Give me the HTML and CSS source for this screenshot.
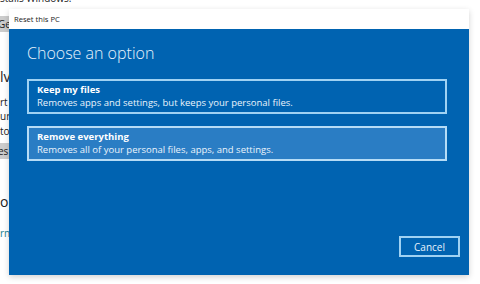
FILE: index.html
```html
<!DOCTYPE html>
<html>
<head>
<meta charset="utf-8">
<link rel="stylesheet" href="styles.css">
</head>
<body>
<div class="page">
  <p class="line top">stalls Windows.</p>
  <span class="gbtn b1">Get started</span>
  <h2 class="h h1">lve problems</h2>
  <p class="line l1">rt your PC</p>
  <p class="line">ur settings</p>
  <p class="line">to fix</p>
  <span class="gbtn b2">es</span>
  <h2 class="h h2">ore options</h2>
  <p class="line link">rn more</p>
</div>
<div class="dialog">
  <div class="titlebar">Reset this PC</div>
  <div class="body">
    <h1 class="heading">Choose an option</h1>
    <div class="options">
      <div class="option">
        <div class="opt-title">Keep my files</div>
        <div class="opt-desc">Removes apps and settings, but keeps your personal files.</div>
      </div>
      <div class="option hover">
        <div class="opt-title">Remove everything</div>
        <div class="opt-desc">Removes all of your personal files, apps, and settings.</div>
      </div>
    </div>
    <div class="footer">
      <button class="cancel">Cancel</button>
    </div>
  </div>
</div>
</body>
</html>
```
FILE: styles.css
```css
html, body {
  margin: 0;
  padding: 0;
  width: 480px;
  height: 284px;
  overflow: hidden;
  background: #ffffff;
  font-family: "Open Sans", "Noto Sans", sans-serif;
}
.page {
  display: flex;
  flex-direction: column;
  align-items: flex-start;
  color: #222;
  white-space: nowrap;
}
.line {
  margin: 0;
  font-size: 10px;
  line-height: 14.5px;
}
.top {
  margin-top: -9px;
}
.gbtn {
  display: block;
  background: #cccccc;
  font-size: 10px;
  line-height: 16px;
  padding: 0 8px 0 0;
  margin-top: 10px;
  text-indent: -2px;
}
.b2 {
  margin-top: 5px;
}
.h {
  margin: 0;
  font-weight: 400;
  font-size: 14px;
  line-height: 18px;
}
.h1 { margin-top: 36px; }
.l1 { margin-top: 9px; }
.h2 { margin-top: 34px; }
.link { color: #1a7f8e; margin-top: 15px; }

.dialog {
  position: absolute;
  left: 9px;
  top: 9px;
  width: 460px;
  height: 266px;
  display: flex;
  flex-direction: column;
  box-shadow: 0 2px 6px rgba(0,0,0,0.18);
}
.titlebar {
  height: 20px;
  background: #ffffff;
  color: #1a1a1a;
  font-size: 7.6px;
  line-height: 20px;
  padding-left: 5px;
  flex: none;
}
.body {
  flex: 1;
  background: #0063b1;
  color: #ffffff;
  display: flex;
  flex-direction: column;
  padding: 0 22px 18px 18px;
}
.heading {
  margin: 11px 0 0 0;
  font-weight: 300;
  font-size: 16px;
  line-height: 26px;
  color: #e8f3fc;
}
.options {
  display: flex;
  flex-direction: column;
  gap: 12px;
  margin-top: 13px;
}
.option {
  border: 2px solid #9fd2f3;
  padding: 2px 8px 3px 8px;
  color: #ffffff;
}
.option.hover {
  background: #2a7dc4;
  border-color: #b5dcf6;
}
.opt-title {
  font-weight: 700;
  font-size: 9.5px;
  line-height: 13px;
}
.opt-desc {
  font-size: 9.5px;
  line-height: 13px;
  color: #eaf4fc;
}
.footer {
  margin-top: auto;
  display: flex;
  justify-content: flex-end;
  margin-right: -13px;
}
.cancel {
  width: 61px;
  height: 21px;
  background: transparent;
  border: 2px solid #9fd2f3;
  color: #e8f3fc;
  font-family: "Open Sans", "Noto Sans", sans-serif;
  font-size: 10px;
  padding: 0;
}
```
